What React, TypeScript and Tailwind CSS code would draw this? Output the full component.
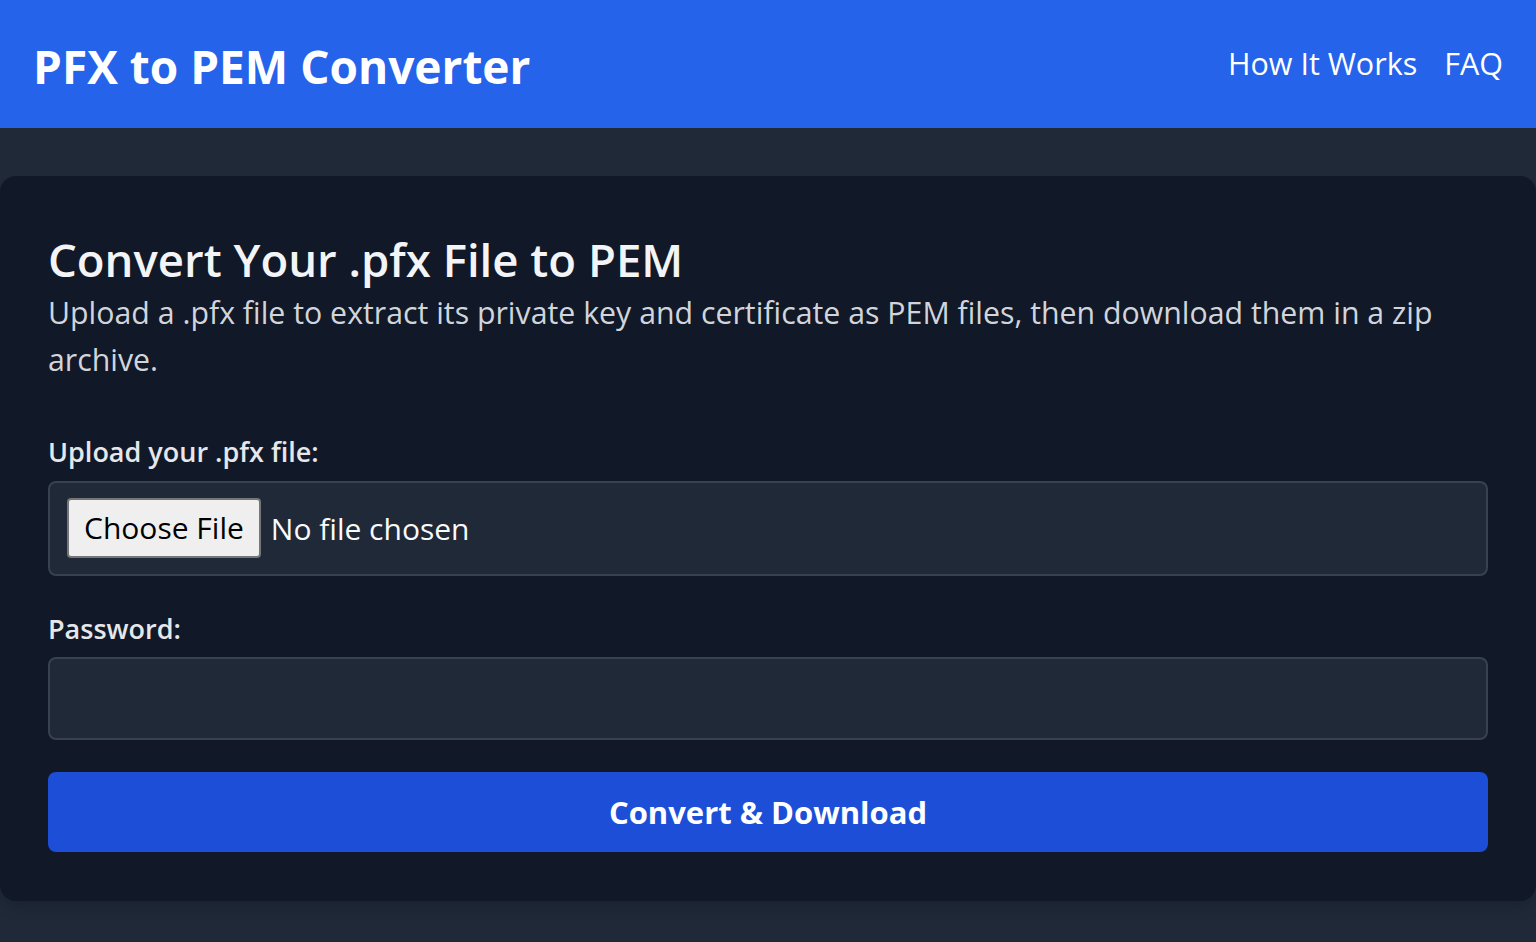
const App = () => {
  return (
    <div className="min-h-screen bg-[#1f2937] font-['Open_Sans',sans-serif] text-[#f3f4f6]">
      {/* Header */}
      <header className="h-[128px] bg-[#2563eb] px-[33px] flex items-center justify-between">
        <h1 className="text-[46px] font-bold text-white leading-none pt-[4px]">PFX to PEM Converter</h1>
        <nav className="flex items-center gap-[27px] text-[30.5px] text-white">
          <a href="#how">How It Works</a>
          <a href="#faq">FAQ</a>
        </nav>
      </header>

      {/* Card */}
      <main className="pt-[48px]">
        <div className="bg-[#111827] rounded-2xl shadow-lg px-[48px] pt-[53px] pb-[49px]">
          <h2 className="text-[45.5px] font-semibold leading-[60px] text-[#f3f4f6]">
            Convert Your .pfx File to PEM
          </h2>
          <p className="text-[30.3px] leading-[47px] text-[#d1d5db]">
            Upload a .pfx file to extract its private key and certificate as PEM files, then download them in a zip
            archive.
          </p>

          <form className="mt-[49px] flex flex-col">
            <label className="text-[27px] font-semibold text-[#e5e7eb] mb-[8px]">Upload your .pfx file:</label>
            <input
              type="file"
              accept=".pfx"
              className="w-full pt-[15px] pb-[16px] px-[17px] bg-[#1f2937] border-2 border-[#374151] rounded-lg text-[30px] text-[#f9fafb] file:mr-[10px] file:h-[60px] file:px-[15px] file:bg-[#efefef] file:text-black file:border-2 file:border-[#767676] file:rounded-[4px]"
            />

            <label className="mt-[33px] text-[27px] font-semibold text-[#e5e7eb] mb-[8px]">Password:</label>
            <input
              type="password"
              className="w-full h-[83px] px-[16px] bg-[#1f2937] border-2 border-[#374151] rounded-lg text-[30px] text-white outline-none"
            />

            <button
              type="button"
              className="mt-[32px] h-[80px] w-full bg-[#1d4ed8] rounded-lg text-[31px] font-bold text-white"
            >
              Convert &amp; Download
            </button>
          </form>
        </div>
      </main>
    </div>
  );
};

export default App;
